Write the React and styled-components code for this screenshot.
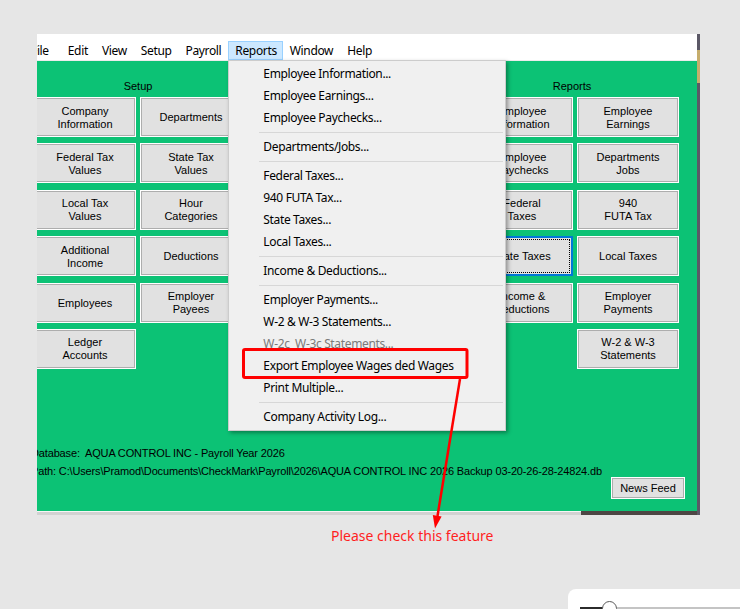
import React from "react";
import styled, { createGlobalStyle, css } from "styled-components";

const GlobalStyle = createGlobalStyle`
  html, body { margin: 0; padding: 0; }
  body {
    background: #e6e6e6;
    width: 740px;
    height: 609px;
    overflow: hidden;
    font-family: "Noto Sans", "Liberation Sans", sans-serif;
  }
`;

const Page = styled.div`
  position: relative;
  width: 740px;
  height: 609px;
  box-sizing: border-box;
  padding: 34px 0 0 37px;
`;

const Desktop = styled.div`
  display: flex;
  align-items: flex-start;
`;

const WindowColumn = styled.div`
  display: flex;
  flex-direction: column;
  width: 660px;
`;

const Viewport = styled.div`
  width: 660px;
  overflow: hidden;
`;

const AppWindow = styled.div`
  margin-left: -13px;
  width: 673px;
  display: flex;
  flex-direction: column;
`;

const MenuBar = styled.div`
  height: 27px;
  box-sizing: border-box;
  padding-top: 7px;
  background: #fff;
  border-bottom: 1px solid #ececec;
  display: flex;
  align-items: flex-start;
  position: relative;
  z-index: 5;
`;

const MenuItem = styled.div`
  position: relative;
  height: 19px;
  box-sizing: border-box;
  padding: 0 6px;
  border: 1px solid transparent;
  font-size: 12px;
  letter-spacing: -0.35px;
  line-height: 17px;
  color: #000;
  white-space: nowrap;
  ${(p) => p.$first && css`padding-right: 11px;`}
  ${(p) =>
    p.$active &&
    css`
      background: #cce8ff;
      border-color: #99d1ff;
      padding-right: 5px;
    `}
`;

const Dropdown = styled.div`
  position: absolute;
  top: 18px;
  left: -1px;
  width: 278px;
  box-sizing: border-box;
  background: #f0f0f0;
  border: 1px solid #cccccc;
  padding: 2px 0;
  box-shadow: 2px 2px 4px rgba(0, 0, 0, 0.35);
  z-index: 10;
  letter-spacing: 0;
`;

const DropItem = styled.div`
  height: 22px;
  line-height: 22px;
  padding-left: 34px;
  font-size: 12px;
  letter-spacing: -0.35px;
  white-space: nowrap;
  color: ${(p) => (p.$disabled ? "#7a7a7a" : "#000")};
`;

const Separator = styled.div`
  position: relative;
  height: 7px;
  margin: 0 2px 0 30px;
  &::before {
    content: "";
    position: absolute;
    left: 0;
    right: 0;
    top: 3px;
    height: 1px;
    background: #d7d7d7;
  }
`;

const Body = styled.div`
  height: 450px;
  box-sizing: border-box;
  background: #0cc275;
  display: flex;
  flex-direction: column;
  padding: 0 12px 12px 7px;
`;

const Sections = styled.div`
  display: grid;
  grid-template-columns: 208px 1fr 208px;
  padding: 0 6px 0 3px;
`;

const Section = styled.div`
  display: flex;
  flex-direction: column;
  grid-column: ${(p) => p.$col};
`;

const SectionTitle = styled.div`
  padding-top: 18px;
  height: 14px;
  line-height: 14px;
  margin-bottom: 4px;
  text-align: center;
  font-family: "Liberation Sans", Arial, sans-serif;
  font-size: 11px;
  color: #000;
  padding-right: ${(p) => p.$shift || 0}px;
`;

const ButtonGrid = styled.div`
  display: grid;
  grid-template-columns: repeat(2, 102px);
  column-gap: 4px;
  grid-auto-rows: 40px;
  row-gap: 6.4px;
`;

const PanelButton = styled.button`
  position: relative;
  box-sizing: border-box;
  margin: 0;
  padding: 1px 0 0;
  width: 100%;
  height: 100%;
  grid-column: ${(p) => p.$col || "auto"};
  display: flex;
  align-items: center;
  justify-content: center;
  text-align: center;
  font-family: "Liberation Sans", Arial, sans-serif;
  font-size: 11px;
  line-height: 13px;
  color: #000;
  background: #e1e1e1;
  border: 1px solid #fff;
  box-shadow: inset 0 0 0 1px #adadad;
  ${(p) =>
    p.$focused &&
    css`
      border: 2px solid #0078d7;
      box-shadow: none;
      &::after {
        content: "";
        position: absolute;
        inset: 1px;
        border: 1px dotted #000;
      }
    `}
`;

const Spacer = styled.div`
  flex: 1;
`;

const Footer = styled.div`
  display: flex;
  flex-direction: column;
`;

const InfoLine = styled.div`
  font-family: "Liberation Sans", Arial, sans-serif;
  font-size: 11px;
  line-height: 18px;
  letter-spacing: -0.15px;
  white-space: nowrap;
  color: #000;
`;

const FooterActions = styled.div`
  display: flex;
  justify-content: flex-end;
  margin-top: -3px;
`;

const NewsButton = styled(PanelButton)`
  width: 74px;
  height: 22px;
  padding: 0;
`;

const BottomEdge = styled.div`
  display: flex;
  height: 4px;
`;

const EdgeShadow = styled.div`
  flex: 1;
  box-sizing: border-box;
  border-top: 1px solid #f6f6f6;
  background: #d2d2d2;
`;

const EdgeDark = styled.div`
  width: 116px;
  background: #4d4644;
`;

const RightStrip = styled.div`
  width: 3px;
  height: 481px;
  background: linear-gradient(
    to bottom,
    #5b5866 0 16px,
    #c6ad6c 16px 49px,
    #5b5866 49px
  );
`;

const Annotation = styled.svg`
  position: absolute;
  left: 0;
  top: 0;
  pointer-events: none;
  z-index: 50;
`;

const Caption = styled.div`
  position: absolute;
  left: 331px;
  top: 527px;
  font-family: "Noto Sans", sans-serif;
  font-size: 14px;
  line-height: 18px;
  color: #ff1f1f;
  white-space: nowrap;
  z-index: 50;
`;

const ZoomPanel = styled.div`
  position: absolute;
  left: 568px;
  top: 589px;
  right: 0;
  bottom: 0;
  background: #fff;
  border-radius: 8px 0 0 0;
  display: flex;
  align-items: flex-start;
  padding: 12px 0 0 12px;
  box-sizing: border-box;
  overflow: hidden;
`;

const SliderFill = styled.div`
  width: 23px;
  height: 3px;
  margin-top: 6px;
  background: #2b2b2b;
`;

const SliderKnob = styled.div`
  width: 15px;
  height: 15px;
  box-sizing: border-box;
  border-radius: 50%;
  border: 1.5px solid #5a5a5a;
  background: #fff;
  margin-left: -1px;
`;

const SliderTrack = styled.div`
  flex: 1;
  height: 2px;
  margin-top: 6px;
  background: #c4c4c4;
`;

const menuBarItems = ["File", "Edit", "View", "Setup", "Payroll", "Reports", "Window", "Help"];

const reportsMenu = [
  { label: "Employee Information..." },
  { label: "Employee Earnings..." },
  { label: "Employee Paychecks..." },
  { sep: true },
  { label: "Departments/Jobs..." },
  { sep: true },
  { label: "Federal Taxes..." },
  { label: "940 FUTA Tax..." },
  { label: "State Taxes..." },
  { label: "Local Taxes..." },
  { sep: true },
  { label: "Income & Deductions..." },
  { sep: true },
  { label: "Employer Payments..." },
  { label: "W-2 & W-3 Statements..." },
  { label: "W-2c\u00a0 W-3c Statements...", disabled: true },
  { label: "Export Employee Wages ded Wages" },
  { label: "Print Multiple..." },
  { sep: true },
  { label: "Company Activity Log..." },
];

const setupButtons = [
  { label: "Company\nInformation" },
  { label: "Departments" },
  { label: "Federal Tax\nValues" },
  { label: "State Tax\nValues" },
  { label: "Local Tax\nValues" },
  { label: "Hour\nCategories" },
  { label: "Additional\nIncome" },
  { label: "Deductions" },
  { label: "Employees" },
  { label: "Employer\nPayees" },
  { label: "Ledger\nAccounts" },
];

const reportButtons = [
  { label: "Employee\nInformation" },
  { label: "Employee\nEarnings" },
  { label: "Employee\nPaychecks" },
  { label: "Departments\nJobs" },
  { label: "Federal\nTaxes" },
  { label: "940\nFUTA Tax" },
  { label: "State Taxes", focused: true },
  { label: "Local Taxes" },
  { label: "Income &\nDeductions" },
  { label: "Employer\nPayments" },
  { label: "W-2 & W-3\nStatements", col: 2 },
];

function Label({ text }) {
  const lines = text.split("\n");
  return (
    <span>
      {lines.map((l, i) => (
        <React.Fragment key={i}>
          {i > 0 && <br />}
          {l}
        </React.Fragment>
      ))}
    </span>
  );
}

function ButtonPanel({ title, buttons, col, titleShift }) {
  return (
    <Section $col={col}>
      <SectionTitle $shift={titleShift}>{title}</SectionTitle>
      <ButtonGrid>
        {buttons.map((b) => (
          <PanelButton key={b.label} $focused={b.focused} $col={b.col}>
            <Label text={b.label} />
          </PanelButton>
        ))}
      </ButtonGrid>
    </Section>
  );
}

export default function App() {
  return (
    <>
      <GlobalStyle />
      <Page>
        <Desktop>
          <WindowColumn>
            <Viewport>
              <AppWindow>
                <MenuBar>
                  {menuBarItems.map((m, i) => (
                    <MenuItem key={m} $first={i === 0} $active={m === "Reports"}>
                      {m}
                      {m === "Reports" && (
                        <Dropdown>
                          {reportsMenu.map((it, idx) =>
                            it.sep ? (
                              <Separator key={idx} />
                            ) : (
                              <DropItem key={idx} $disabled={it.disabled}>
                                {it.label}
                              </DropItem>
                            )
                          )}
                        </Dropdown>
                      )}
                    </MenuItem>
                  ))}
                </MenuBar>
                <Body>
                  <Sections>
                    <ButtonPanel title="Setup" buttons={setupButtons} col={1} />
                    <ButtonPanel title="Reports" buttons={reportButtons} col={3} titleShift={6} />
                  </Sections>
                  <Spacer />
                  <Footer>
                    <InfoLine>Database:&nbsp; AQUA CONTROL INC - Payroll Year 2026</InfoLine>
                    <InfoLine>
                      Path: C:\Users\Pramod\Documents\CheckMark\Payroll\2026\AQUA CONTROL INC 2026 Backup 03-20-26-28-24824.db
                    </InfoLine>
                    <FooterActions>
                      <NewsButton>News Feed</NewsButton>
                    </FooterActions>
                  </Footer>
                </Body>
              </AppWindow>
            </Viewport>
            <BottomEdge>
              <EdgeShadow />
              <EdgeDark />
            </BottomEdge>
          </WindowColumn>
          <RightStrip />
        </Desktop>

        <Annotation width="740" height="609" viewBox="0 0 740 609">
          <rect x="243.5" y="349.5" width="223.5" height="28" rx="1.5" fill="none" stroke="#ff0000" strokeWidth="3" />
          <line x1="460" y1="379" x2="437.5" y2="516" stroke="#ff0000" strokeWidth="2.5" />
          <polygon points="435,528.5 432.8,514.9 441.6,516.4" fill="#ff0000" />
        </Annotation>
        <Caption>Please check this feature</Caption>

        <ZoomPanel>
          <SliderFill />
          <SliderKnob />
          <SliderTrack />
        </ZoomPanel>
      </Page>
    </>
  );
}
